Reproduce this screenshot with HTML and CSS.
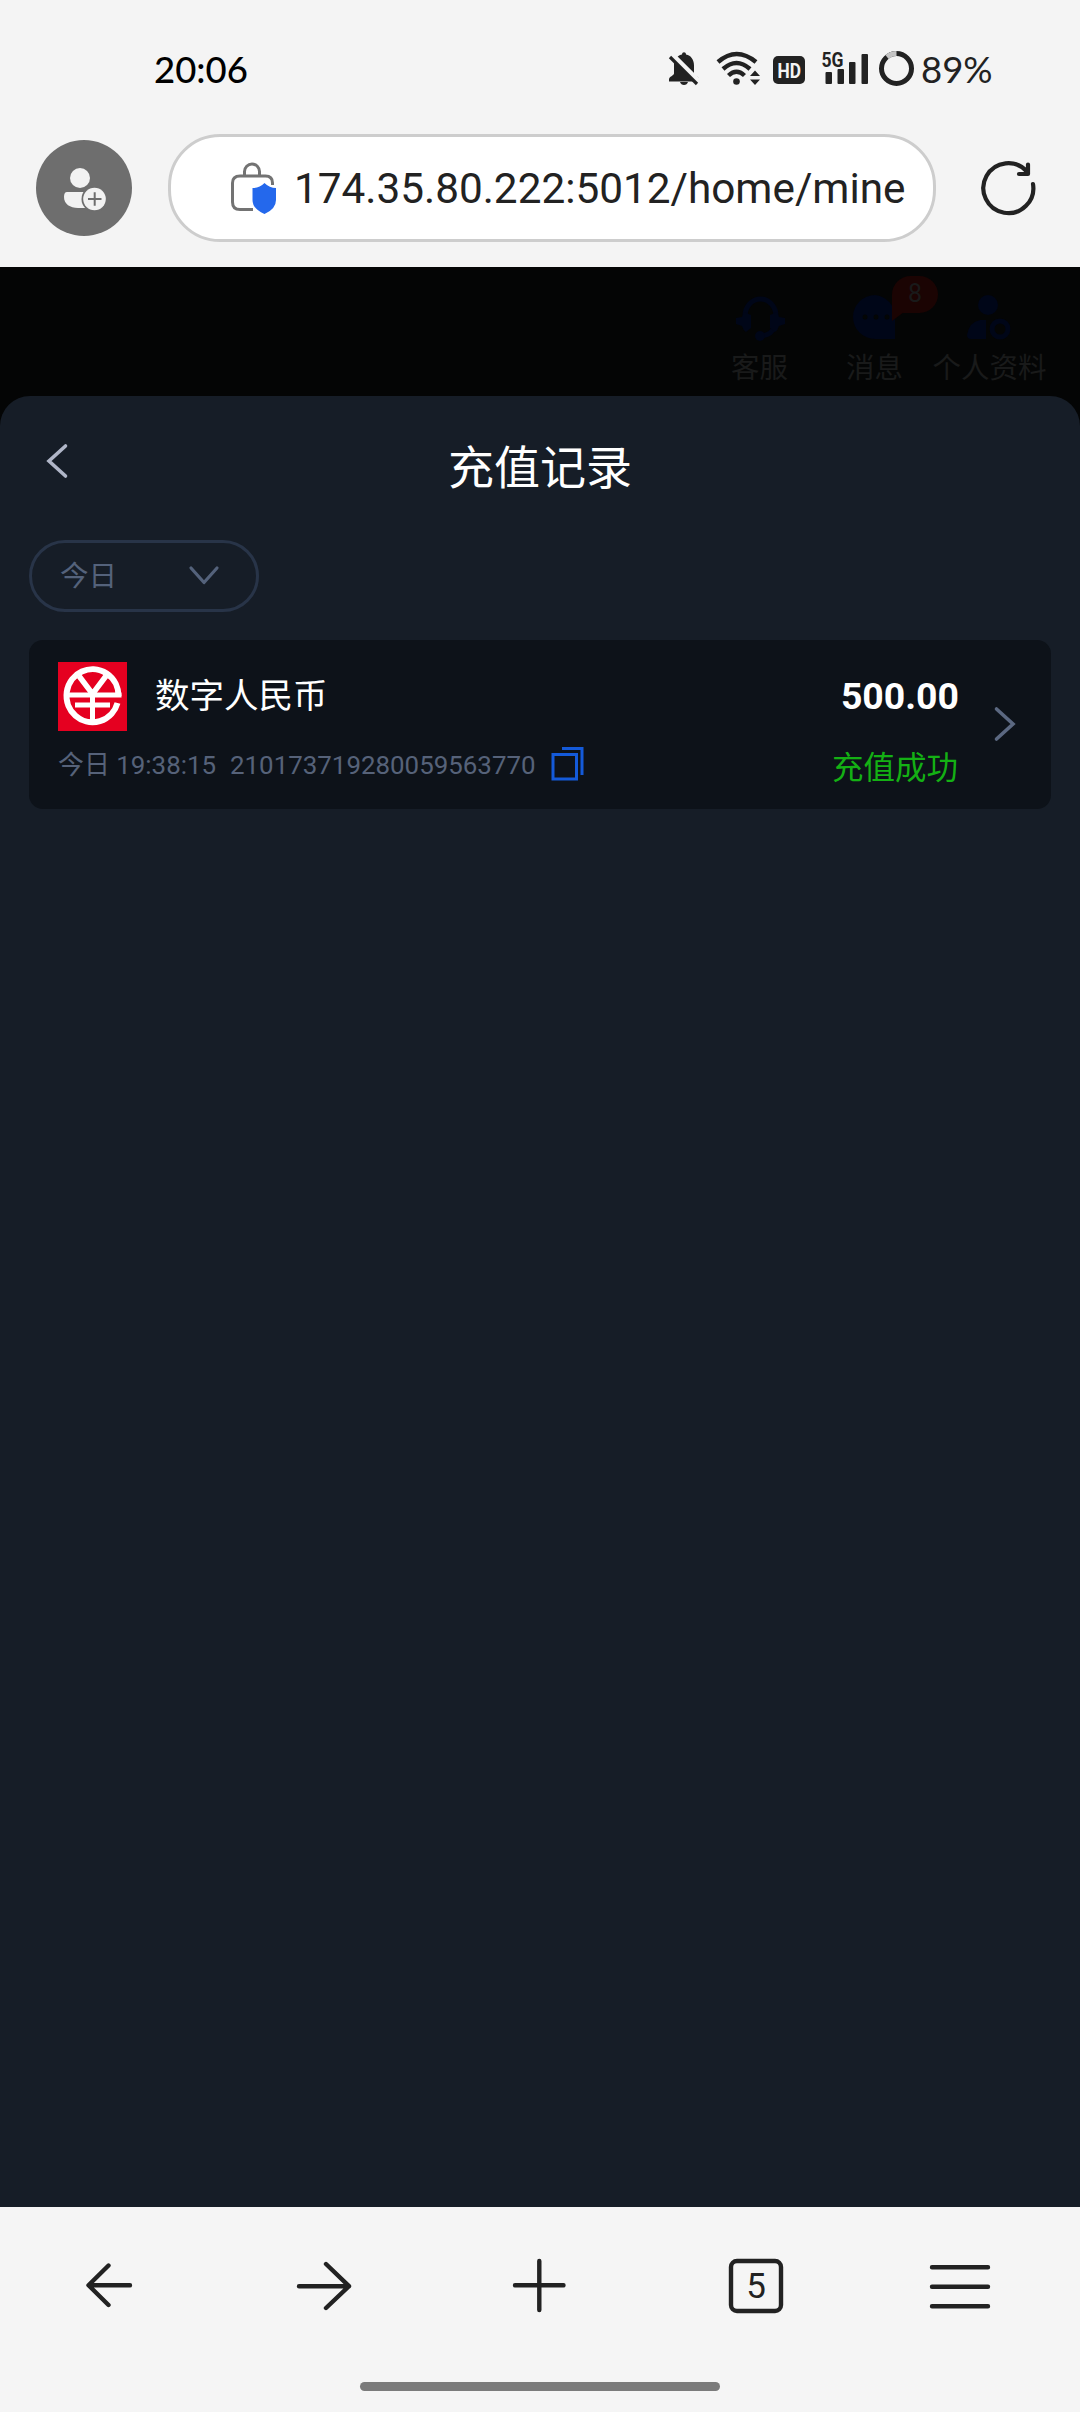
FILE: index.html
```html
<!DOCTYPE html>
<html lang="zh-CN">
<head>
<meta charset="utf-8">
<title>充值记录</title>
<link rel="stylesheet" href="styles.css">
</head>
<body>
<header class="chrome-top">
  <div class="status">
    <span class="clock">20:06</span>
    <svg class="status-icons" width="252" height="44" viewBox="664 46 252 44">
      <g fill="#222">
        <path d="M674 62c1-4 5-7 8-7.500c0-3 4-3 4 0c5 1 8 5 8 11v8c0 2 5 3 5 6v2h-30v-2c0-3 5-4 5-6v-8z"/>
        <path d="M680 82h8q-1 3-4 3t-4-3z"/>
        <circle cx="736.500" cy="81.500" r="3.300"/>
        <path d="M750 76l5-5.500l5 5.500zM750 79.500l5 5.500l5-5.500z"/>
        <rect x="773" y="56" width="32" height="28" rx="5"/>
        <rect x="825.500" y="72" width="6.500" height="12" rx="1"/><rect x="837.500" y="69" width="6.500" height="15" rx="1"/><rect x="849" y="62" width="6.500" height="22" rx="1"/><rect x="861.500" y="54" width="6.500" height="30" rx="1"/>
      </g>
      <path d="M672 55l27 27" stroke="#f4f4f4" stroke-width="6"/>
      <path d="M670 57l27 27" stroke="#222" stroke-width="3.200"/>
      <g fill="none" stroke="#222" stroke-width="4.400"><path d="M718 62q18.500-16 38 0M723 69q13.500-12 27 0M728.500 75.500q8-7.500 16 0"/></g>
      <text class="hd" x="777.500" y="77.500" textLength="23.500" lengthAdjust="spacingAndGlyphs">HD</text>
      <text class="five-g" x="821.500" y="66.500" textLength="22" lengthAdjust="spacingAndGlyphs">5G</text>
      <circle cx="896.500" cy="68.500" r="15" fill="none" stroke="#222" stroke-width="5"/>
      <path d="M887 57a15 15 0 0 1 9.500-3.500" fill="none" stroke="#c4c4c4" stroke-width="5"/>
    </svg>
    <span class="battery">89%</span>
  </div>
  <div class="address-row">
    <svg class="avatar" width="96" height="96" viewBox="0 0 96 96">
      <circle cx="48" cy="48" r="48" fill="#6e6e6e"/>
      <circle cx="44" cy="38" r="10" fill="#f2f2f2"/>
      <path d="M31 52h26v16H42c-8 0-14-4-14-11q0-5 3-5z" fill="#f2f2f2"/>
      <circle cx="58.500" cy="59" r="13" fill="#6e6e6e"/>
      <circle cx="58.500" cy="59" r="11.300" fill="#f2f2f2"/>
      <path d="M52 59h13.500M58.700 52.300v13.500" stroke="#6e6e6e" stroke-width="2"/>
    </svg>
    <div class="address">
      <svg width="47" height="53" viewBox="0 0 47 53" fill="none">
        <path d="M13.500 14V9.500a7.500 7.500 0 0 1 15 0V14M41.500 23v-2q0-7-7-7H9q-7.500 0-7.500 7v19q0 7.500 7.500 7.500h13" stroke="#737373" stroke-width="3"/>
        <path d="M33.500 21q5 5 11.500 5v12q0 9-11.500 14q-12-5-12-14V26q7 0 12-5z" fill="#2468ec"/>
      </svg>
      <span>174.35.80.222:5012/home/mine</span>
    </div>
    <svg class="reload" width="58" height="58" viewBox="979 159 58 58" fill="none" stroke="#222" stroke-width="4.200" stroke-linecap="round">
      <path d="M1033 184a25 25 0 1 1-6-12.500M1028 164.500v9.500h-9" stroke-linejoin="round"/>
    </svg>
  </div>
</header>
<main class="page">
  <nav class="shortcuts">
    <a class="shortcut"><svg width="52" height="48" viewBox="0 0 52 48"><path d="M11 22a15.500 17 0 0 1 31 0M41 32q-3 9-14 10" fill="none" stroke="#000618" stroke-width="5"/><path d="M10 18l7 3v13l-5 4q-3-2-4-6l-6-2v-6l6-1zM43 18l-7 3v13l5 4q3-2 4-6l6-2v-6l-6-1z" fill="#000618"/><circle cx="26" cy="42" r="5" fill="#000618"/></svg><span>客服</span></a>
    <a class="shortcut"><svg width="48" height="48" viewBox="0 0 48 48"><path d="M24 1a22 22 0 1 0 0 44h20V23A22 22 0 0 0 24 1z" fill="#000618"/><g fill="#030505"><circle cx="14" cy="23" r="2.500"/><circle cx="25" cy="23" r="2.500"/><circle cx="36" cy="23" r="2.500"/></g></svg><span>消息</span><b class="badge">8</b></a>
    <a class="shortcut"><svg width="48" height="48" viewBox="0 0 48 48"><g fill="#000618"><circle cx="22" cy="11" r="10"/><path d="M20 26v19H5q-4 0-4-4q2-13 13-15z"/></g><circle cx="34" cy="35" r="8" fill="none" stroke="#000618" stroke-width="5"/></svg><span>个人资料</span></a>
  </nav>
  <section class="sheet">
    <div class="title-row">
      <svg class="back" width="26" height="40" viewBox="0 0 26 40" fill="none" stroke="#b0b6c8" stroke-width="3.600" stroke-linecap="round"><path d="M21.500 5L5 20l16.500 15"/></svg>
      <h1>充值记录</h1>
    </div>
    <button class="filter"><span>今日</span><svg width="32" height="22" viewBox="0 0 32 22" fill="none" stroke="#54627b" stroke-width="3.200" stroke-linecap="round" stroke-linejoin="round"><path d="M3 3l13 14.500L29 3"/></svg></button>
    <article class="record">
      <div class="info">
        <div class="method">
          <svg width="69" height="69" viewBox="0 0 69 69"><rect width="69" height="69" fill="#e50020"/><g fill="none" stroke="#fff"><path d="M60.500 34a26 26.500 0 1 0-1 7" stroke-width="6"/><path d="M8 33h55.500M17 43h35M34.500 33v28" stroke-width="5"/><path d="M21 14l13.500 18L48 14" stroke-width="5.500"/></g></svg>
          <span>数字人民币</span>
        </div>
        <div class="meta">
          <span class="time">今日 19:38:15</span>
          <span class="order">210173719280059563770</span>
          <svg class="copy" width="33" height="35" viewBox="0 0 33 35" fill="none" stroke="#145ad9" stroke-width="3"><path d="M2 8.500h23.500v24.500H2zM11 2.500h20V29"/></svg>
        </div>
      </div>
      <div class="result"><strong>500.00</strong><span>充值成功</span></div>
      <svg class="go" width="26" height="40" viewBox="0 0 26 40" fill="none" stroke="#5b6881" stroke-width="3.600" stroke-linecap="round"><path d="M4.500 5L21 20L4.500 35"/></svg>
    </article>
  </section>
</main>
<footer class="chrome-bottom">
  <svg width="1080" height="70" viewBox="0 2250 1080 70" fill="none" stroke="#222" stroke-width="4.400" stroke-linecap="round" stroke-linejoin="round">
    <path d="M130 2285.300H89M108.500 2265.500L88.500 2285.300L108.500 2305"/>
    <path d="M299 2286.200H349M326 2264L349 2286.200L326 2308"/>
    <path d="M515 2285.300H563.500M539.300 2261V2310"/>
    <rect x="731" y="2261" width="50" height="50" rx="6"/>
    <path d="M932 2267.300h56M932 2286.800h56M932 2306.300h56"/>
    <text x="756" y="2298" class="tabs">5</text>
  </svg>
  <div class="home-bar"></div>
</footer>
</body>
</html>
```
FILE: styles.css
```css
* { box-sizing: border-box; }
body { margin: 0; width: 1080px; height: 2412px; display: flex; flex-direction: column; overflow: hidden; background: #f5f5f5; font-family: Roboto, "Noto Sans CJK SC", sans-serif; color: #222; }
svg { display: block; flex: none; }
.chrome-top { height: 267px; flex: none; background: #f4f4f4; }
.status { height: 134px; padding: 46px 86px 0 154px; display: flex; align-items: flex-start; }
.clock { flex: 1; font: 500 36.500px/46px Lato, sans-serif; color: #000; }
.status-icons { margin-right: 5px; }
.battery { width: 73px; font: 400 36.500px/46px Lato, sans-serif; white-space: nowrap; }
.hd { font: 700 21px Roboto, sans-serif; fill: #f4f4f4; }
.five-g { font: 700 19.500px Roboto, sans-serif; fill: #222; }
.address-row { height: 108px; padding: 0 43px 0 36px; display: flex; align-items: center; }
.address { width: 768px; height: 108px; margin: 0 43px 0 36px; padding-left: 60px; display: flex; align-items: center; gap: 16px; border: 3px solid #cdcdcd; border-radius: 52px; background: #fff; font-size: 42.300px; white-space: nowrap; }
.page { height: 1940px; flex: none; display: flex; flex-direction: column; background: #040505; }
.shortcuts { height: 129px; flex: none; display: flex; justify-content: flex-end; padding: 27px 33px 0 0; }
.shortcut { position: relative; width: 115px; display: flex; flex-direction: column; align-items: center; font-size: 28.500px; line-height: 40px; color: #191a1a; white-space: nowrap; gap: 7px; }
.badge { position: absolute; left: 75px; top: -18px; width: 46px; height: 37px; border-radius: 19px 19px 19px 0; background: #1b0403; font-size: 25px; font-weight: 400; line-height: 35px; text-align: center; }
.badge::after { content: ""; position: absolute; left: 0; top: 36px; width: 12px; height: 9px; background: #1b0403; clip-path: polygon(0 0, 100% 0, 0 100%); }
.sheet { flex: 1; padding: 0 29px; border-radius: 30px 30px 0 0; background: #161d27; }
.title-row { height: 144px; position: relative; }
.back { position: absolute; left: 15px; top: 45px; }
h1 { margin: 0; padding-top: 39px; font-size: 46px; line-height: 66px; font-weight: 400; text-align: center; color: #fff; }
.filter { width: 230px; height: 72px; padding: 2px 36px 0 28px; display: flex; align-items: center; justify-content: space-between; border: 3px solid #283448; border-radius: 36px; background: none; color: #54627b; font: 400 28.500px/40px Roboto, "Noto Sans CJK SC", sans-serif; }
.filter svg { margin-top: -2px; }
.record { height: 169px; margin-top: 28px; padding: 22px 33px 0 29px; display: flex; border-radius: 14px; background: #0d1219; }
.info { flex: 1; }
.method { display: flex; align-items: center; gap: 28px; height: 69px; font-size: 34.500px; line-height: 50px; color: #fff; }
.method span { padding-bottom: 1px; }
.meta { display: flex; align-items: center; margin-top: 14px; height: 40px; font-size: 25.900px; line-height: 40px; color: #566279; white-space: nowrap; }
.time { width: 172px; }
.order { width: 321px; }
.copy { margin-top: -4px; }
.result { display: flex; flex-direction: column; align-items: flex-end; color: #fff; }
.result strong { font-size: 37.400px; line-height: 68px; }
.result span { font-size: 31.500px; line-height: 40px; margin: 19px 1px 0 0; color: #14b014; }
.go { margin: 42px 0 0 33px; }
.chrome-bottom { height: 205px; padding-top: 43px; }
.tabs { font: 400 35px Roboto, sans-serif; fill: #222; stroke: none; text-anchor: middle; }
.home-bar { width: 360px; height: 9px; margin: 62px auto 0; border-radius: 5px; background: #7b7b7b; }
```
